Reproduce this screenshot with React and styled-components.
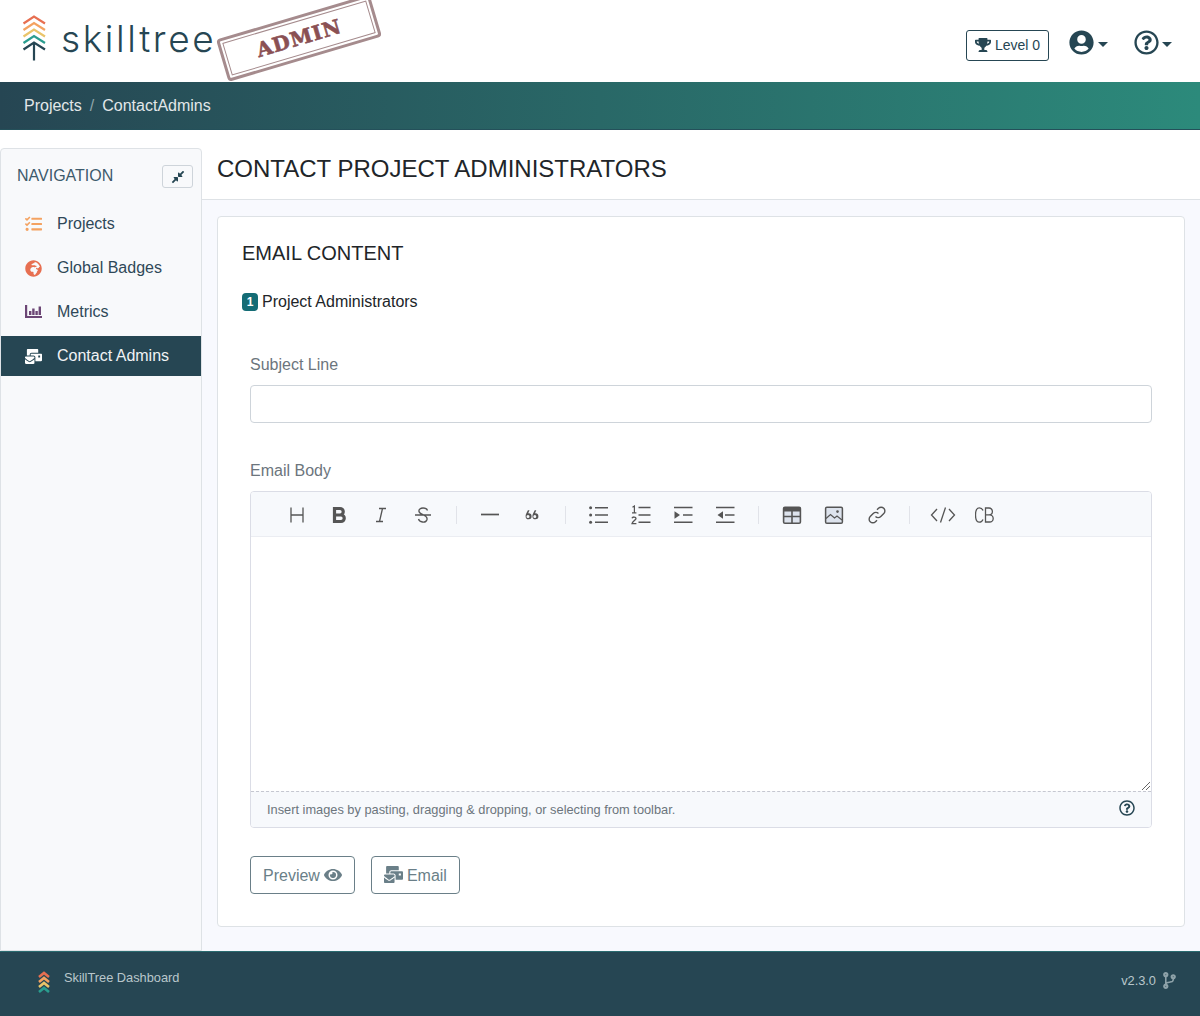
import React from 'react';
import styled, { createGlobalStyle } from 'styled-components';
import {
  FaTrophy, FaUserCircle, FaRegQuestionCircle, FaTasks, FaGlobeAfrica,
  FaMailBulk, FaCompressAlt, FaEye, FaCodeBranch,
} from 'react-icons/fa';

const navy = '#264653';

const Global = createGlobalStyle`
  html, body { margin: 0; padding: 0; background: #fff; }
  body { font-family: "Liberation Sans", Arial, sans-serif; color: #212529; font-size: 16px; }
  * { box-sizing: border-box; }
`;

const Page = styled.div`
  width: 1200px;
  height: 1016px;
  display: flex;
  flex-direction: column;
  overflow: hidden;
`;

const Header = styled.header`
  height: 82px;
  display: flex;
  align-items: center;
  justify-content: space-between;
  padding: 0 28px 0 22px;
`;

const Brand = styled.div`
  position: relative;
  display: flex;
  align-items: center;
  gap: 15px;
  margin-bottom: 7px;
`;

const BrandName = styled.span`
  font-family: Inter, sans-serif;
  font-weight: 300;
  font-size: 37px;
  letter-spacing: 2.6px;
  line-height: 46px;
  color: ${navy};
  margin-top: 3px;
`;

const Stamp = styled.div`
  position: absolute;
  left: 197px;
  top: 3px;
  width: 160px;
  height: 44px;
  border: 3px solid #a58b8d;
  border-radius: 4px;
  transform: rotate(-16.5deg);
  display: flex;
  align-items: center;
  justify-content: center;
  &::after {
    content: '';
    position: absolute;
    inset: 2px;
    border: 1px solid #a58b8d;
  }
`;

const StampText = styled.span`
  font-family: "DejaVu Serif", serif;
  font-weight: 700;
  font-size: 20px;
  letter-spacing: 1px;
  color: #8a5053;
  -webkit-text-stroke: 0.6px #8a5053;
`;

const HeaderActions = styled.div`
  display: flex;
  align-items: center;
  margin-top: 9px;
`;

const LevelBadge = styled.div`
  width: 83px;
  height: 31px;
  padding-bottom: 1px;
  border: 1px solid ${navy};
  border-radius: 3px;
  display: flex;
  align-items: center;
  justify-content: center;
  gap: 4px;
  font-size: 14px;
  color: ${navy};
  margin-right: 20px;
`;

const MenuToggle = styled.div`
  display: flex;
  align-items: center;
  color: ${navy};
  gap: ${p => p.$gap}px;
  margin-left: ${p => p.$offset || 0}px;
  margin-top: -7px;
`;

const Caret = styled.span`
  width: 0;
  height: 0;
  margin-top: 4px;
  border-left: 5px solid transparent;
  border-right: 5px solid transparent;
  border-top: 5px solid ${navy};
`;

const Crumbs = styled.nav`
  height: 48px;
  background: linear-gradient(90deg, #264653 0%, #2c8a7b 100%);
  display: flex;
  align-items: center;
  padding: 0 24px;
  font-size: 16px;
  color: #e2e7e9;
  border-bottom: 1px solid #24505a;
`;

const CrumbSep = styled.span`
  color: #8fa5ab;
  margin: 0 8px;
`;

const Body = styled.div`
  flex: 1;
  display: flex;
  padding: 18px 0 0 0;
  min-height: 0;
`;

const Sidebar = styled.aside`
  width: 202px;
  background: #f8f9fb;
  border: 1px solid #dee2e6;
  border-radius: 4px 4px 0 0;
  margin-right: -1px;
  position: relative;
  z-index: 1;
`;

const SideHead = styled.div`
  height: 55px;
  display: flex;
  align-items: center;
  justify-content: space-between;
  padding: 0 8px 2px 16px;
  font-size: 16px;
  color: #3d5a6c;
`;

const Collapse = styled.div`
  width: 31px;
  height: 23px;
  background: #f8f9fb;
  border: 1px solid #ced4da;
  border-radius: 3px;
  margin-top: 2px;
  display: flex;
  align-items: center;
  justify-content: center;
  color: ${navy};
`;

const NavItem = styled.div`
  height: 40px;
  margin-bottom: 4px;
  display: flex;
  align-items: center;
  padding-left: 24px;
  gap: 15px;
  font-size: 16px;
  background: ${p => (p.$active ? navy : 'transparent')};
  color: ${p => (p.$active ? '#f1f3f5' : '#2f4858')};
`;

const NavIcon = styled.span`
  width: 17px;
  height: 17px;
  display: flex;
  align-items: center;
  justify-content: center;
  color: ${p => p.$color};
`;

const Main = styled.main`
  flex: 1;
  min-width: 0;
  background: #f8f9fe;
  display: flex;
  flex-direction: column;
`;

const TitleBar = styled.div`
  height: 52px;
  background: #fff;
  border-bottom: 1px solid #dee2e6;
  padding: 0 0 10px 16px;
  display: flex;
  align-items: center;
`;

const Title = styled.h1`
  margin: 0;
  font-weight: 400;
  font-size: 24px;
  color: #212529;
  text-transform: uppercase;
`;

const Content = styled.div`
  flex: 1;
  padding: 16px 15px 24px 16px;
`;

const Card = styled.section`
  height: 711px;
  background: #fff;
  border: 1px solid #dee2e6;
  border-radius: 4px;
  padding: 24px 32px 0 24px;
`;

const CardTitle = styled.h2`
  margin: 0;
  font-weight: 400;
  font-size: 20px;
  line-height: 24px;
  color: #212529;
  text-transform: uppercase;
`;

const Admins = styled.div`
  display: flex;
  align-items: center;
  gap: 4px;
  margin-top: 25px;
  height: 24px;
  font-size: 16px;
`;

const Badge = styled.span`
  width: 16px;
  height: 18px;
  border-radius: 4px;
  background: #146c75;
  color: #fff;
  font-size: 12px;
  font-weight: 700;
  display: flex;
  align-items: center;
  justify-content: center;
`;

const Form = styled.div`
  padding-left: 8px;
`;

const Label = styled.label`
  display: block;
  color: #6c757d;
  font-size: 16px;
  line-height: 24px;
  margin-top: ${p => p.$top}px;
  margin-bottom: ${p => p.$bottom}px;
`;

const Input = styled.input`
  display: block;
  width: 100%;
  height: 38px;
  border: 1px solid #ced4da;
  border-radius: 4px;
  background: #fff;
`;

const Editor = styled.div`
  border: 1px solid #dbdde6;
  border-radius: 4px;
  height: 337px;
  display: flex;
  flex-direction: column;
  overflow: hidden;
  margin-top: -1px;
`;

const Toolbar = styled.div`
  height: 45px;
  flex: none;
  background: #f7f9fc;
  border-bottom: 1px solid #ebedf2;
  display: flex;
  align-items: center;
  padding: 2px 0 0 25px;
`;

const ToolButton = styled.span`
  width: 32px;
  height: 32px;
  margin: 0 5px;
  display: flex;
  align-items: center;
  justify-content: center;
  color: #555;
  flex: none;
`;

const ToolDivider = styled.span`
  width: 1px;
  height: 18px;
  margin: 0 12px;
  background: #e1e3e9;
  flex: none;
`;

const Writing = styled.div`
  flex: 1;
  background: #fff;
  position: relative;
`;

const Grip = styled.svg`
  position: absolute;
  right: 0;
  bottom: 0;
`;

const EditorFoot = styled.div`
  height: 36px;
  flex: none;
  background: #f7f9fc;
  border-top: 1px dashed #c5c7d0;
  display: flex;
  align-items: center;
  justify-content: space-between;
  padding: 0 16px;
  font-size: 12.8px;
  color: #6c757d;
  svg { color: ${navy}; margin-top: -3px; }
`;

const Actions = styled.div`
  display: flex;
  gap: 16px;
  margin-top: 28px;
`;

const ActionButton = styled.button`
  height: 38px;
  padding: 1px 12px 0;
  background: #fff;
  border: 1px solid #6a7f88;
  border-radius: 4px;
  color: #6a7f88;
  font: 16px "Liberation Sans", Arial, sans-serif;
  display: flex;
  align-items: center;
  gap: 4px;
  svg { margin-top: -2px; }
`;

const Footer = styled.footer`
  height: 65px;
  flex: none;
  background: ${navy};
  border-top: 1px solid #2a6b70;
  display: flex;
  justify-content: space-between;
  padding: 0 22px 0 38px;
  font-size: 12.8px;
  color: #b9c6cb;
`;

const FootBrand = styled.div`
  display: flex;
  align-items: flex-start;
  gap: 14px;
  padding-top: 18px;
  line-height: 15px;
`;

const FootVersion = styled.div`
  display: flex;
  align-items: center;
  gap: 5px;
  height: 15px;
  margin-top: 21px;
  svg { color: #8ea2a9; }
`;

// chevrons of the logo, top one first
const chevrons = ['#e76f51', '#f4a261', '#e9c46a', '#2a9d8f'];

const TreeLogo = () => (
  <svg width="24" height="46" viewBox="0 0 24 46" fill="none" strokeWidth="2.2">
    {chevrons.map((c, i) => (
      <path key={c} d={`M1.5 ${8.5 + i * 6.5} L12 ${1.5 + i * 6.5} L23 ${8.5 + i * 6.5}`} stroke={c} />
    ))}
    <path d="M1.5 34.5 L12 27.5 L23 34.5 M12 28 V45.5" stroke={navy} />
  </svg>
);

const SmallLogo = () => (
  <svg width="12" height="22" viewBox="0 0 12 22" fill="none" strokeWidth="2.6" style={{ marginTop: 1 }}>
    {chevrons.map((c, i) => (
      <path key={c} d={`M1 ${6 + i * 5} L6 ${2 + i * 5} L11 ${6 + i * 5}`} stroke={c} />
    ))}
  </svg>
);

const MetricsIcon = () => (
  <svg width="17" height="14" viewBox="0 0 17 14" fill="currentColor">
    <path d="M0 0h2.2v11h14.8v2H0z" />
    <path d="M4 6h2.4v4H4zM7.2 3.5h2.4V10H7.2zM10.4 6h2.4v4h-2.4zM13.6 1.5H16V10h-2.4z" />
  </svg>
);

const Tool = ({ children, w = 20, h = 20, vb = '0 0 20 20', ...rest }) => (
  <ToolButton>
    <svg width={w} height={h} viewBox={vb} fill="none" stroke="currentColor" strokeWidth="1.5" {...rest}>
      {children}
    </svg>
  </ToolButton>
);

const EditorToolbar = () => (
  <Toolbar>
    <Tool><path d="M4 2.5V17.5M16 2.5V17.5M4 10H16" strokeWidth="1.3" /></Tool>
    <Tool><path d="M5.5 3.5H11a3 3 0 0 1 0 6.5H5.5zM5.5 10H12a3.2 3.2 0 0 1 0 6.5H5.5z" strokeWidth="3.2" /></Tool>
    <Tool><path d="M8 3.5H15M5 16.5H12M11.5 3.5L8.5 16.5" strokeWidth="1.3" /></Tool>
    <Tool><path d="M2 10H18M14.5 5.5C14 3.5 12 3 10 3 7.5 3 5.5 4.5 6 6.5 6.4 8.4 9 9.4 10.5 10 13 11 14.5 12 14 14.5 13.5 16.6 11.5 17.3 9.5 17 7.5 16.7 6 16 5.5 14" strokeWidth="1.3" /></Tool>
    <ToolDivider />
    <Tool><path d="M1 9.5H19" strokeWidth="1.7" /></Tool>
    <Tool fill="#555" stroke="none"><path d="M7.5 5.2 6.2 8.3a3 3 0 1 1-2.6 2.9c0-1.2.5-2.4 1.4-4.1l.9-1.9zM6 10a1.5 1.5 0 1 0 0 3 1.5 1.5 0 0 0 0-3zM14.3 5.2 13 8.3a3 3 0 1 1-2.6 2.9c0-1.2.5-2.4 1.4-4.1l.9-1.9zM12.8 10a1.5 1.5 0 1 0 0 3 1.5 1.5 0 0 0 0-3z" /></Tool>
    <ToolDivider />
    <Tool>
      <path d="M6 2.8H19M6 10H19M6 17.2H19" strokeWidth="1.4" />
      <circle cx="1.6" cy="2.8" r="1.5" fill="#555" stroke="none" />
      <circle cx="1.6" cy="10" r="1.5" fill="#555" stroke="none" />
      <circle cx="1.6" cy="17.2" r="1.5" fill="#555" stroke="none" />
    </Tool>
    <Tool>
      <path d="M7.5 2.5H19.5M7.5 10H19.5M7.5 17.2H19.5" strokeWidth="1.4" />
      <path d="M1.5 2.2 3.4 1V7.8M1 7.8H5.4" strokeWidth="1.2" />
      <path d="M1 13.2C1.5 11.6 5 11.6 5 13.4 5 15 1.6 16 1 18.6H5.4" strokeWidth="1.3" />
    </Tool>
    <Tool>
      <path d="M1 2.5H19.5M10 10H19.5M1 17.2H19.5" strokeWidth="1.4" />
      <path d="M1.5 6.2 7 10 1.5 13.8z" fill="#555" stroke="none" />
    </Tool>
    <Tool>
      <path d="M1 2.5H19.5M10 10H19.5M1 17.2H19.5" strokeWidth="1.4" />
      <path d="M8 6.2 2.5 10 8 13.8z" fill="#555" stroke="none" />
    </Tool>
    <ToolDivider />
    <Tool>
      <rect x="1.6" y="2.3" width="16.8" height="16" rx="1.3" fill="#dde3ed" strokeWidth="1.6" />
      <path d="M1.6 4.5H18.4" strokeWidth="4" />
      <path d="M1.6 11.5H18.4M10 5V18" strokeWidth="1.6" />
    </Tool>
    <Tool>
      <rect x="1.6" y="2.3" width="16.8" height="16" rx="1.3" fill="#dde3ed" strokeWidth="1.5" />
      <path d="M2 13.5 6.5 9.5 10.5 13 13 11 18 15" strokeWidth="1.2" />
      <circle cx="13.5" cy="6.6" r="1.3" fill="#555" stroke="none" />
    </Tool>
    <Tool vb="-1 0 20 20">
      <path d="M8.5 11.5a3.7 3.7 0 0 0 5.3 0l3-3a3.7 3.7 0 0 0-5.3-5.2L10 4.8" strokeWidth="1.4" />
      <path d="M11.5 8.5a3.7 3.7 0 0 0-5.3 0l-3 3a3.7 3.7 0 0 0 5.3 5.2L10 15.2" strokeWidth="1.4" />
    </Tool>
    <ToolDivider />
    <Tool w={26} vb="0 0 26 20">
      <path d="M7 4 1.5 10 7 16M19 4l5.5 6L19 16M15.5 2.5 10.5 17.5" strokeWidth="1.3" />
    </Tool>
    <Tool vb="1 0 20 20">
      <path d="M9 5.5C8.2 3.5 6.8 2.8 5.4 2.8 3 2.8 1.5 5 1.5 10s1.5 7.2 3.9 7.2c1.4 0 2.8-.7 3.6-2.7" strokeWidth="1.3" />
      <path d="M11.5 3H15a3.4 3.4 0 0 1 0 6.8H11.5zM11.5 9.8H15.6a3.6 3.6 0 0 1 0 7.2H11.5z" strokeWidth="1.3" />
    </Tool>
  </Toolbar>
);

const navItems = [
  { label: 'Projects', color: '#f4a261', icon: <FaTasks size={18} /> },
  { label: 'Global Badges', color: '#e76f51', icon: <FaGlobeAfrica size={17} /> },
  { label: 'Metrics', color: '#6c4675', icon: <MetricsIcon /> },
  { label: 'Contact Admins', color: '#fff', icon: <FaMailBulk size={19} />, active: true },
];

export default function App() {
  return (
    <Page>
      <Global />
      <Header>
        <Brand>
          <TreeLogo />
          <BrandName>skilltree</BrandName>
          <Stamp><StampText>ADMIN</StampText></Stamp>
        </Brand>
        <HeaderActions>
          <LevelBadge><FaTrophy size={16} /> Level 0</LevelBadge>
          <MenuToggle $gap={4}><FaUserCircle size={25} /><Caret /></MenuToggle>
          <MenuToggle $gap={3} $offset={26}><FaRegQuestionCircle size={25} /><Caret /></MenuToggle>
        </HeaderActions>
      </Header>

      <Crumbs>
        <span>Projects</span>
        <CrumbSep>/</CrumbSep>
        <span>ContactAdmins</span>
      </Crumbs>

      <Body>
        <Sidebar>
          <SideHead>
            NAVIGATION
            <Collapse><FaCompressAlt size={14} /></Collapse>
          </SideHead>
          {navItems.map(item => (
            <NavItem key={item.label} $active={item.active}>
              <NavIcon $color={item.color}>{item.icon}</NavIcon>
              {item.label}
            </NavItem>
          ))}
        </Sidebar>

        <Main>
          <TitleBar><Title>Contact Project Administrators</Title></TitleBar>
          <Content>
            <Card>
              <CardTitle>Email Content</CardTitle>
              <Admins><Badge>1</Badge> Project Administrators</Admins>
              <Form>
                <Label $top={39} $bottom={8}>Subject Line</Label>
                <Input />
                <Label $top={36} $bottom={9}>Email Body</Label>
                <Editor>
                  <EditorToolbar />
                  <Writing>
                    <Grip width="10" height="10" viewBox="0 0 10 10" stroke="#666" strokeWidth="1">
                      <path d="M1 9 9 1M5 9 9 5" />
                    </Grip>
                  </Writing>
                  <EditorFoot>
                    Insert images by pasting, dragging &amp; dropping, or selecting from toolbar.
                    <FaRegQuestionCircle size={16} />
                  </EditorFoot>
                </Editor>
                <Actions>
                  <ActionButton>Preview <FaEye size={18} /></ActionButton>
                  <ActionButton><FaMailBulk size={19} /> Email</ActionButton>
                </Actions>
              </Form>
            </Card>
          </Content>
        </Main>
      </Body>

      <Footer>
        <FootBrand><SmallLogo /> SkillTree Dashboard</FootBrand>
        <FootVersion>v2.3.0 <FaCodeBranch size={17} /></FootVersion>
      </Footer>
    </Page>
  );
}
